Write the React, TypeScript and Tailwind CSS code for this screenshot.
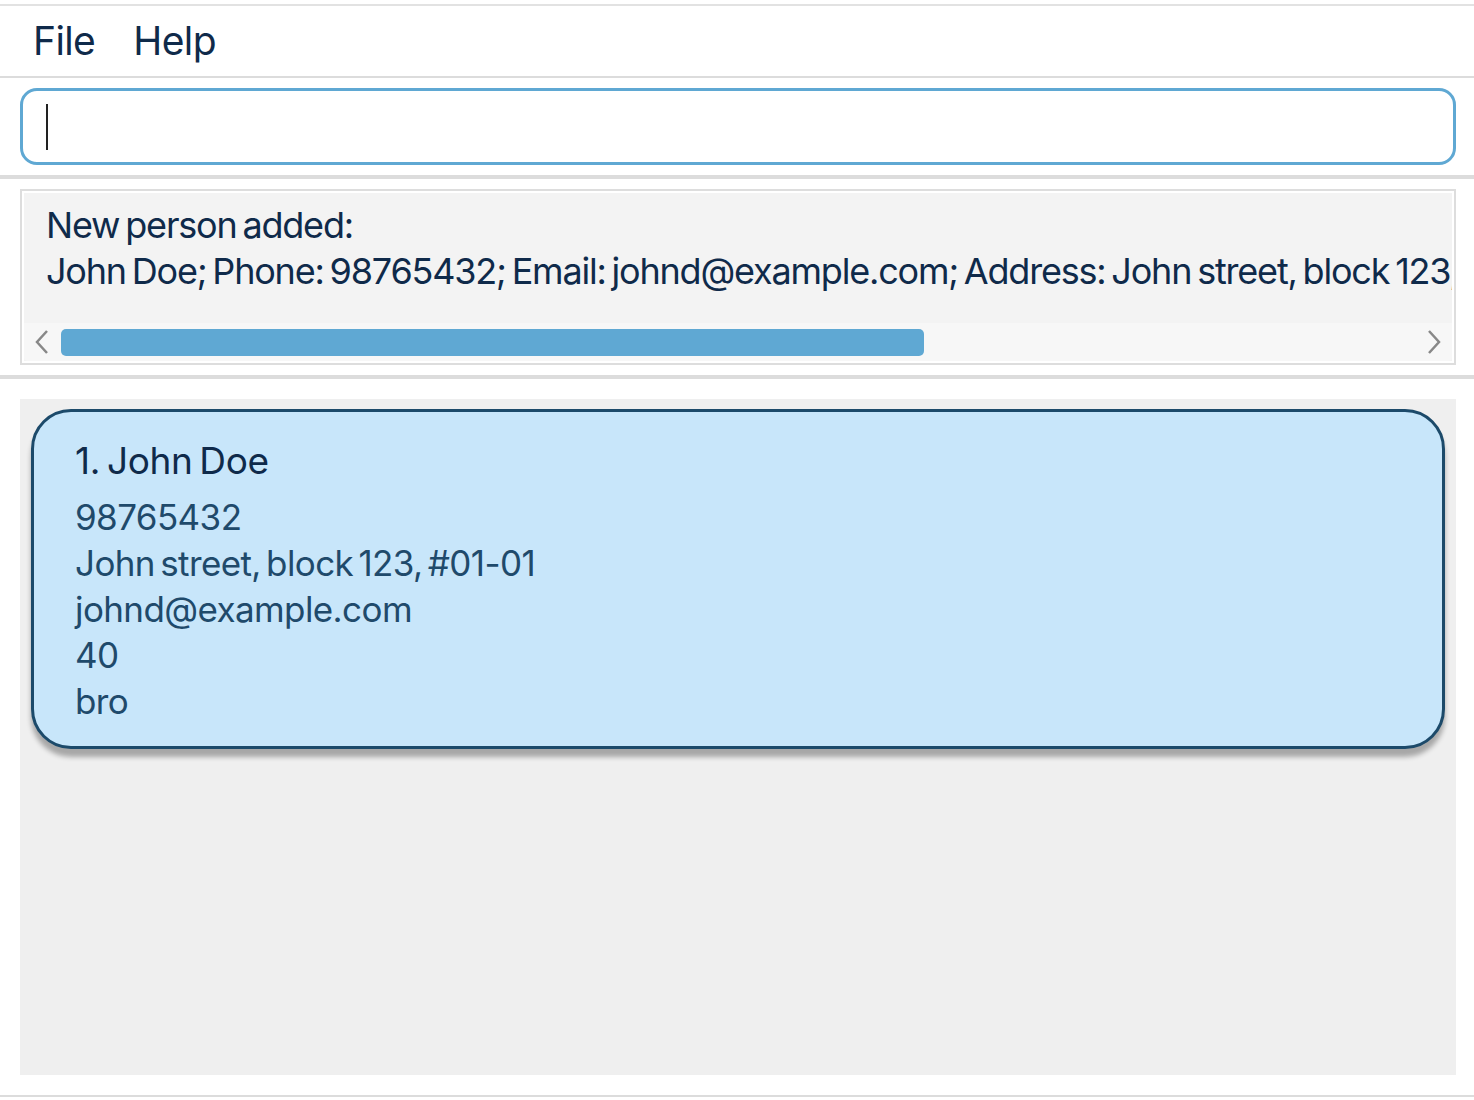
import React from "react";

const font = "font-['Inter','Noto_Sans',sans-serif]";

const MenuBar = () => (
  <div className="flex h-[70px] shrink-0 items-center gap-[38px] pl-[33px] text-[39px] tracking-[-0.6px] text-[#0f2a4a]">
    <span>File</span>
    <span>Help</span>
  </div>
);

const CommandBox = () => (
  <div className="shrink-0 pl-[20px] pr-[18px] py-[10px]">
    <div className="flex h-[77px] items-center rounded-[17px] border-[3px] border-[#5fa8d3] bg-white pl-[23px]">
      <div className="h-[46px] w-[1.5px] bg-[#222]" />
    </div>
  </div>
);

const Chevron = ({ dir }: { dir: "left" | "right" }) => (
  <svg width="14" height="26" viewBox="0 0 14 26" className="shrink-0">
    <path
      d={dir === "left" ? "M12 2 L2 13 L12 24" : "M2 2 L12 13 L2 24"}
      fill="none"
      stroke="#888"
      strokeWidth="2.5"
    />
  </svg>
);

const ResultBox = () => (
  <div className="shrink-0 pl-[20px] pr-[18px] py-[10px]">
    <div className="h-[176px] border-2 border-[#dddddd] bg-white p-[2px]">
      <div className="flex h-full flex-col overflow-hidden bg-[#f3f3f3]">
        <div className="h-[130px] shrink-0 overflow-hidden whitespace-nowrap pl-[22px] pt-[9px] text-[36px] leading-[46px] tracking-[-1.2px] [word-spacing:-3px] text-[#0f2a4a]">
          <div>New person added:</div>
          <div>
            John Doe; Phone: 98765432; Email: johnd@example.com; Address: John street, block 123, #01-01
          </div>
        </div>
        <div className="flex h-[38px] shrink-0 items-center gap-[12px] rounded-b-[4px] bg-[#f7f7f7] px-[11px]">
          <Chevron dir="left" />
          <div className="flex-1">
            <div className="h-[27px] w-[863px] rounded-[5px] bg-[#5fa8d3]" />
          </div>
          <Chevron dir="right" />
        </div>
      </div>
    </div>
  </div>
);

const PersonCard = () => (
  <div className="mx-[11px] rounded-[40px] border-[3px] border-[#1c4a6a] bg-[#c8e6fa] pb-[22px] pl-[41px] pt-[23px] shadow-[0_8px_5px_rgba(0,0,0,0.3)]">
    <div className="text-[37px] leading-[52px] tracking-[-0.4px] [word-spacing:-3px] text-[#0f2a4a]">
      1. John Doe
    </div>
    <div className="mt-[7px] text-[35px] leading-[46px] tracking-[-0.6px] [word-spacing:-4px] text-[#1f4a6b]">
      <div>98765432</div>
      <div>John street, block 123, #01-01</div>
      <div>johnd@example.com</div>
      <div>40</div>
      <div>bro</div>
    </div>
  </div>
);

export default function App() {
  return (
    <div className={`flex h-[1100px] w-full flex-col overflow-hidden bg-white ${font}`}>
      <div className="mt-[4px] h-[2px] shrink-0 bg-[#e2e2e2]" />
      <MenuBar />
      <div className="h-[2px] shrink-0 bg-[#dcdcdc]" />
      <CommandBox />
      <div className="h-[4px] shrink-0 bg-[#dcdcdc]" />
      <ResultBox />
      <div className="h-[4px] shrink-0 bg-[#dcdcdc]" />
      <div className="shrink-0 pl-[20px] pr-[18px] pt-[20px]">
        <div className="h-[676px] bg-[#efefef] pt-[10px]">
          <PersonCard />
        </div>
      </div>
      <div className="mt-[20px] h-[2px] shrink-0 bg-[#dcdcdc]" />
    </div>
  );
}
